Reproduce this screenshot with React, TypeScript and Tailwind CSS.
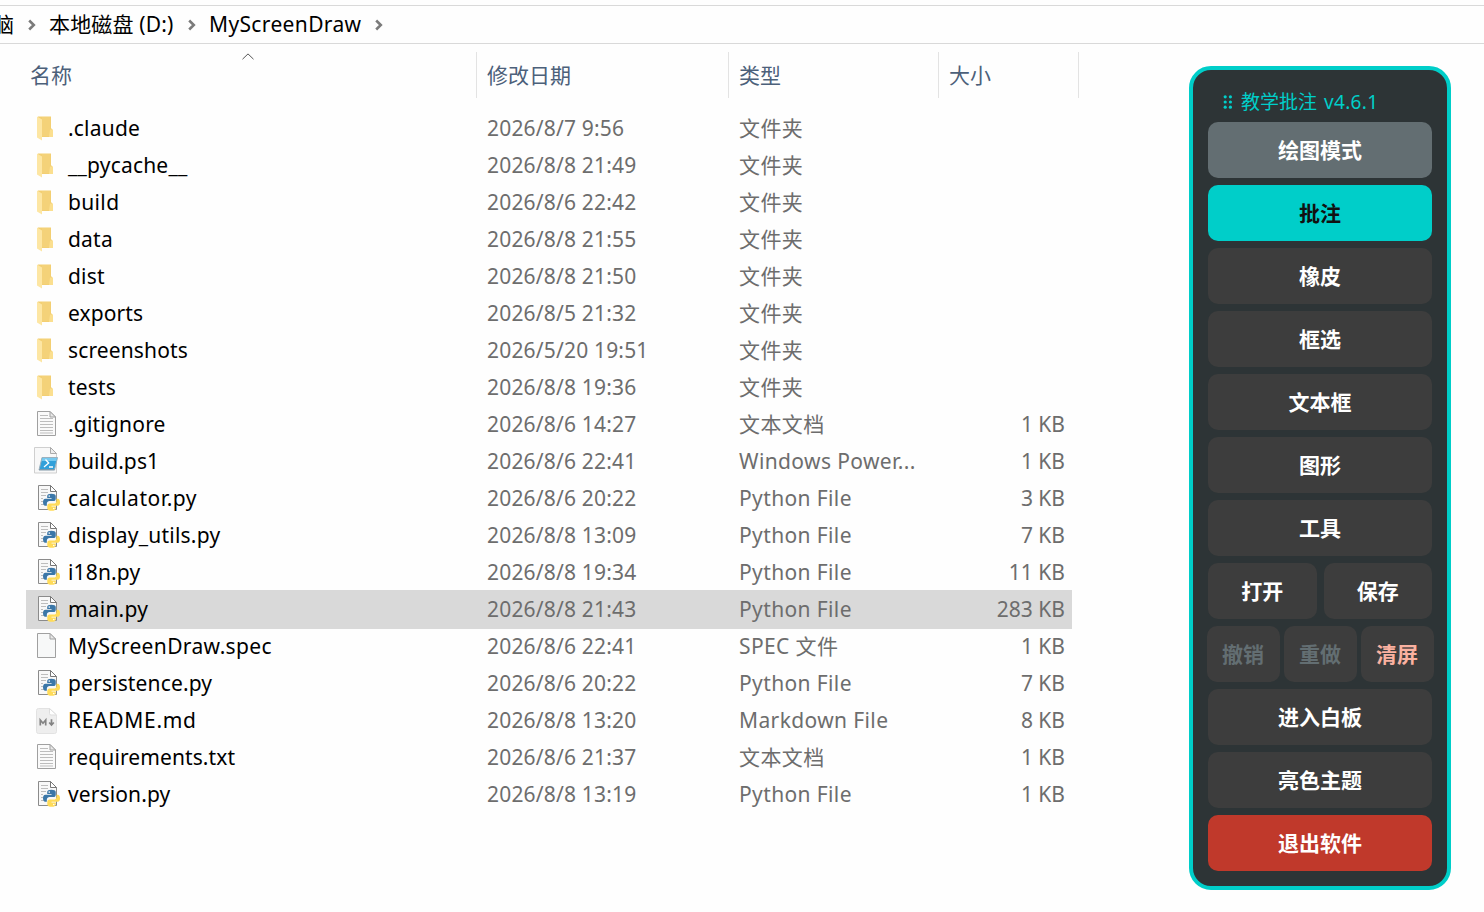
import React from "react";

type Kind = "folder" | "text" | "ps" | "py" | "blank" | "md";

type Entry = {
  name: string;
  tracking: string;
  date: string;
  type: string;
  size?: string;
  kind: Kind;
  selected?: boolean;
};

const entries: Entry[] = [
  { name: ".claude", tracking: "tracking-[0.2px]", date: "2026/8/7 9:56", type: "文件夹", kind: "folder" },
  { name: "__pycache__", tracking: "tracking-[0.2px]", date: "2026/8/8 21:49", type: "文件夹", kind: "folder" },
  { name: "build", tracking: "tracking-[0.35px]", date: "2026/8/6 22:42", type: "文件夹", kind: "folder" },
  { name: "data", tracking: "tracking-[0.2px]", date: "2026/8/8 21:55", type: "文件夹", kind: "folder" },
  { name: "dist", tracking: "tracking-[0.2px]", date: "2026/8/8 21:50", type: "文件夹", kind: "folder" },
  { name: "exports", tracking: "tracking-[0.1px]", date: "2026/8/5 21:32", type: "文件夹", kind: "folder" },
  { name: "screenshots", tracking: "tracking-[0.13px]", date: "2026/5/20 19:51", type: "文件夹", kind: "folder" },
  { name: "tests", tracking: "tracking-[0.2px]", date: "2026/8/8 19:36", type: "文件夹", kind: "folder" },
  { name: ".gitignore", tracking: "tracking-[0.2px]", date: "2026/8/6 14:27", type: "文本文档", size: "1 KB", kind: "text" },
  { name: "build.ps1", tracking: "tracking-[0.1px]", date: "2026/8/6 22:41", type: "Windows Power...", size: "1 KB", kind: "ps" },
  { name: "calculator.py", tracking: "tracking-[0.55px]", date: "2026/8/6 20:22", type: "Python File", size: "3 KB", kind: "py" },
  { name: "display_utils.py", tracking: "tracking-[0.22px]", date: "2026/8/8 13:09", type: "Python File", size: "7 KB", kind: "py" },
  { name: "i18n.py", tracking: "tracking-[0.15px]", date: "2026/8/8 19:34", type: "Python File", size: "11 KB", kind: "py" },
  { name: "main.py", tracking: "tracking-[0.2px]", date: "2026/8/8 21:43", type: "Python File", size: "283 KB", kind: "py", selected: true },
  { name: "MyScreenDraw.spec", tracking: "tracking-[0.36px]", date: "2026/8/6 22:41", type: "SPEC 文件", size: "1 KB", kind: "blank" },
  { name: "persistence.py", tracking: "tracking-[0.15px]", date: "2026/8/6 20:22", type: "Python File", size: "7 KB", kind: "py" },
  { name: "README.md", tracking: "tracking-[0.7px]", date: "2026/8/8 13:20", type: "Markdown File", size: "8 KB", kind: "md" },
  { name: "requirements.txt", tracking: "tracking-[0.1px]", date: "2026/8/6 21:37", type: "文本文档", size: "1 KB", kind: "text" },
  { name: "version.py", tracking: "tracking-[0.12px]", date: "2026/8/8 13:19", type: "Python File", size: "1 KB", kind: "py" },
];

function FileIcon({ kind }: { kind: Kind }) {
  return (
    <svg viewBox="0 0 28 30" className="h-[30px] w-7 shrink-0 overflow-visible">
      {kind === "folder" && (
        <>
          <path d="M5 2.5H18V14L20 16.5V23H6Z" fill="#f3cf72" />
          <path d="M9 3H17V22H9Z" fill="#f4d279" />
          <path d="M17 15.5H20V23H16Z" fill="#fbdf8f" />
          <path d="M4 2.5L9 5.5V26.5L4 23.5Z" fill="#fde6a3" />
        </>
      )}
      {(kind === "text" || kind === "blank") && (
        <>
          <path d="M4.5 1.5H17L22.5 7V25.5H4.5Z" fill={kind === "text" ? "#fafafa" : "#f7f8f8"} stroke="#a0a0a0" />
          <path d="M17 1.5V7H22.5Z" fill="#e8e8e8" stroke="#a0a0a0" />
        </>
      )}
      {kind === "text" && (
        <path d="M7 5.5H15M7 8.5H20M7 11.5H20M7 14.5H20M7 17.5H20M7 20.5H20M7 23H20" stroke="#bdbdbd" />
      )}
      {kind === "py" && (
        <>
          <path d="M5.5 1.5H17.5L23.5 7.5V25.5H5.5Z" fill="#f8f8f8" stroke="#8b8b8b" />
          <path d="M17.5 1.5V7.5H23.5Z" fill="#fff" stroke="#777" />
          <path d="M8 5.5H15M8 8.5H15M8 11.5H13M8 14.5H10M8 17.5H10M8 20.5H12" stroke="#bdbdbd" />
          <g transform="translate(10 9.8) scale(0.7)">
            <path
              d="M11.9 0C8.4 0 6 .9 6 3.3V6H12.2V7H3.4C1 7 0 9.4 0 12.2S1.2 17.2 3.2 17.2H5.5V14C5.5 11.8 7.4 10.2 9.3 10.2H15C16.9 10.2 18.2 8.8 18.2 6.9V3.3C18.2 1 15.5 0 11.9 0Z"
              fill="#3b77a8"
            />
            <path
              d="M12.4 24.2C15.9 24.2 18.3 23.3 18.3 20.9V18.2H12.1V17.2H20.9C23.3 17.2 24.3 14.8 24.3 12S23.1 7 21.1 7H19.3V10.2C19.3 12.4 17.4 14 15.5 14H9.3C7.4 14 6.1 15.4 6.1 17.3V20.9C6.1 23.2 8.8 24.2 12.4 24.2Z"
              fill="#ffdb58"
            />
            <circle cx="8.9" cy="3.3" r="1.1" fill="#fff" />
            <circle cx="15.4" cy="20.9" r="1.1" fill="#fff" />
          </g>
        </>
      )}
      {kind === "ps" && (
        <>
          <path d="M1.5 0.5H17.5L23.5 6.5V26H1.5Z" fill="#f8f8f8" stroke="#cfcfcf" />
          <path d="M17.5 0.5V6.5H23.5Z" fill="#ededed" stroke="#aaa" />
          <path d="M9 10.5H24.5L21.5 23H6Z" fill="#31a0da" stroke="#9bb0bd" />
          <path d="M9.4 11H24L23.2 14H8.6Z" fill="#75c9ef" />
          <path d="M12.5 12.5L15.7 16L11 20M16 20H20" stroke="#fff" strokeWidth="1.3" fill="none" />
          <path d="M6 22.7H21.7" stroke="#7f96a5" />
        </>
      )}
      {kind === "md" && (
        <>
          <path d="M5.5 2.5H16.5L23.5 9V25.5A2 2 0 0 1 21.5 27.5H5.5A2 2 0 0 1 3.5 25.5V4.5A2 2 0 0 1 5.5 2.5Z" fill="#eeeeee" stroke="#e2e2e2" />
          <path d="M16.5 2.5V7.5A1.5 1.5 0 0 0 18 9H23.5Z" fill="#fff" stroke="#ddd" />
          <path d="M7.3 19.5V14L10 17.2L12.7 14V19.5" stroke="#838383" strokeWidth="1.7" fill="none" />
          <path d="M18.5 13.2V19M16.2 16.5L18.5 19L20.8 16.5" stroke="#838383" strokeWidth="1.7" fill="none" />
        </>
      )}
    </svg>
  );
}

function Chevron() {
  return (
    <svg viewBox="0 0 8 12" className="h-3 w-2 shrink-0">
      <path d="M1.2 1.5L5.8 6L1.2 10.5" fill="none" stroke="#7b7b7b" strokeWidth="2.6" />
    </svg>
  );
}

function Breadcrumb() {
  return (
    <div className="mt-[5px] flex h-[39px] items-center overflow-hidden border-y border-[#d9d9d9] whitespace-nowrap text-black">
      <span className="-ml-[7px] w-[21px]">脑</span>
      <span className="ml-[14px] flex w-[21px]"><Chevron /></span>
      <span className="w-[139px] tracking-[0.15px]">本地磁盘 (D:)</span>
      <span className="flex w-[21px]"><Chevron /></span>
      <span className="w-[166px] tracking-[0.36px]">MyScreenDraw</span>
      <Chevron />
    </div>
  );
}

function ColumnHeader() {
  return (
    <div className="flex h-[66px] pt-2 text-[#4c607a]">
      <div className="relative flex h-[46px] w-[477px] items-center border-r border-[#e3e3e3] pt-px pl-[30px]">
        名称
        <svg viewBox="0 0 12 7" className="absolute top-[1px] left-[242px] h-[7px] w-3">
          <path d="M0.5 6.2L6 0.9L11.5 6.2" fill="none" stroke="#555" />
        </svg>
      </div>
      <div className="flex h-[46px] w-[252px] items-center border-r border-[#e3e3e3] pt-px pl-[10px]">修改日期</div>
      <div className="flex h-[46px] w-[210px] items-center border-r border-[#e3e3e3] pt-px pl-[10px]">类型</div>
      <div className="flex h-[46px] w-[140px] items-center border-r border-[#e3e3e3] pt-px pl-[10px]">大小</div>
    </div>
  );
}

function Row({ entry }: { entry: Entry }) {
  return (
    <div
      className={
        entry.selected
          ? "-my-px ml-[26px] flex h-[39px] w-[1046px] items-center bg-[#d9d9d9] pl-[7px]"
          : "ml-[26px] flex h-[37px] w-[1046px] items-center pl-[7px]"
      }
    >
      <FileIcon kind={entry.kind} />
      <span className={`ml-[7px] w-[419px] text-black ${entry.tracking}`}>{entry.name}</span>
      <span className="w-[252px] tracking-[0.18px] text-[#6d6d6d]">{entry.date}</span>
      <span className="w-[210px] tracking-[0.38px] text-[#6d6d6d]">{entry.type}</span>
      <span className="w-[116px] text-right text-[#6d6d6d]">{entry.size}</span>
    </div>
  );
}

const base = "flex h-14 items-center justify-center rounded-[10px] text-[21px] font-bold";

function ToolPanel() {
  return (
    <aside className="mt-[66px] ml-[111px] flex h-[824px] w-[262px] flex-col rounded-[22px] border-4 border-[#00cec9] bg-[#2d3436] px-[15px] pt-[16px]">
      <div className="flex h-[32px] items-center pl-[15px] text-[19px] text-[#00cec9]">
        <svg viewBox="0 0 10 14" className="mr-[8px] h-[14px] w-[10px]" fill="#00cec9">
          {[2.2, 7.4].map((x) => [1.8, 7, 12.2].map((y) => <circle key={`${x}-${y}`} cx={x} cy={y} r="1.6" />))}
        </svg>
        <span>
          教学批注 <span className="ml-[2px] tracking-[0.35px]">v4.6.1</span>
        </span>
      </div>
      <div className="mt-[4px] flex flex-col gap-[7px] text-white">
        <button className={`${base} bg-[#636e72]`}>绘图模式</button>
        <button className={`${base} bg-[#00cec9] text-[#111]`}>批注</button>
        {["橡皮", "框选", "文本框", "图形", "工具"].map((label) => (
          <button key={label} className={`${base} bg-[#3d3d3d]`}>{label}</button>
        ))}
        <div className="grid grid-cols-2 gap-[7px]">
          <button className={`${base} bg-[#3d3d3d]`}>打开</button>
          <button className={`${base} bg-[#3d3d3d]`}>保存</button>
        </div>
        <div className="-mx-[1.5px] grid grid-cols-3 gap-1">
          <button className={`${base} bg-[#3d3d3d] text-[#636e72]`}>撤销</button>
          <button className={`${base} bg-[#3d3d3d] text-[#636e72]`}>重做</button>
          <button className={`${base} bg-[#3d3d3d] text-[#fab1a0]`}>清屏</button>
        </div>
        <button className={`${base} bg-[#3d3d3d]`}>进入白板</button>
        <button className={`${base} bg-[#3d3d3d]`}>亮色主题</button>
        <button className={`${base} bg-[#c0392b]`}>退出软件</button>
      </div>
    </aside>
  );
}

export default function App() {
  return (
    <div className="grid h-[912px] w-[1484px] overflow-hidden bg-[#fefefe] font-['Noto_Sans','Noto_Sans_CJK_SC',sans-serif] text-[21px] leading-none">
      <main className="col-start-1 row-start-1">
        <Breadcrumb />
        <ColumnHeader />
        {entries.map((entry) => (
          <Row key={entry.name} entry={entry} />
        ))}
      </main>
      <div className="z-10 col-start-1 row-start-1 ml-[1078px] self-start">
        <ToolPanel />
      </div>
    </div>
  );
}
